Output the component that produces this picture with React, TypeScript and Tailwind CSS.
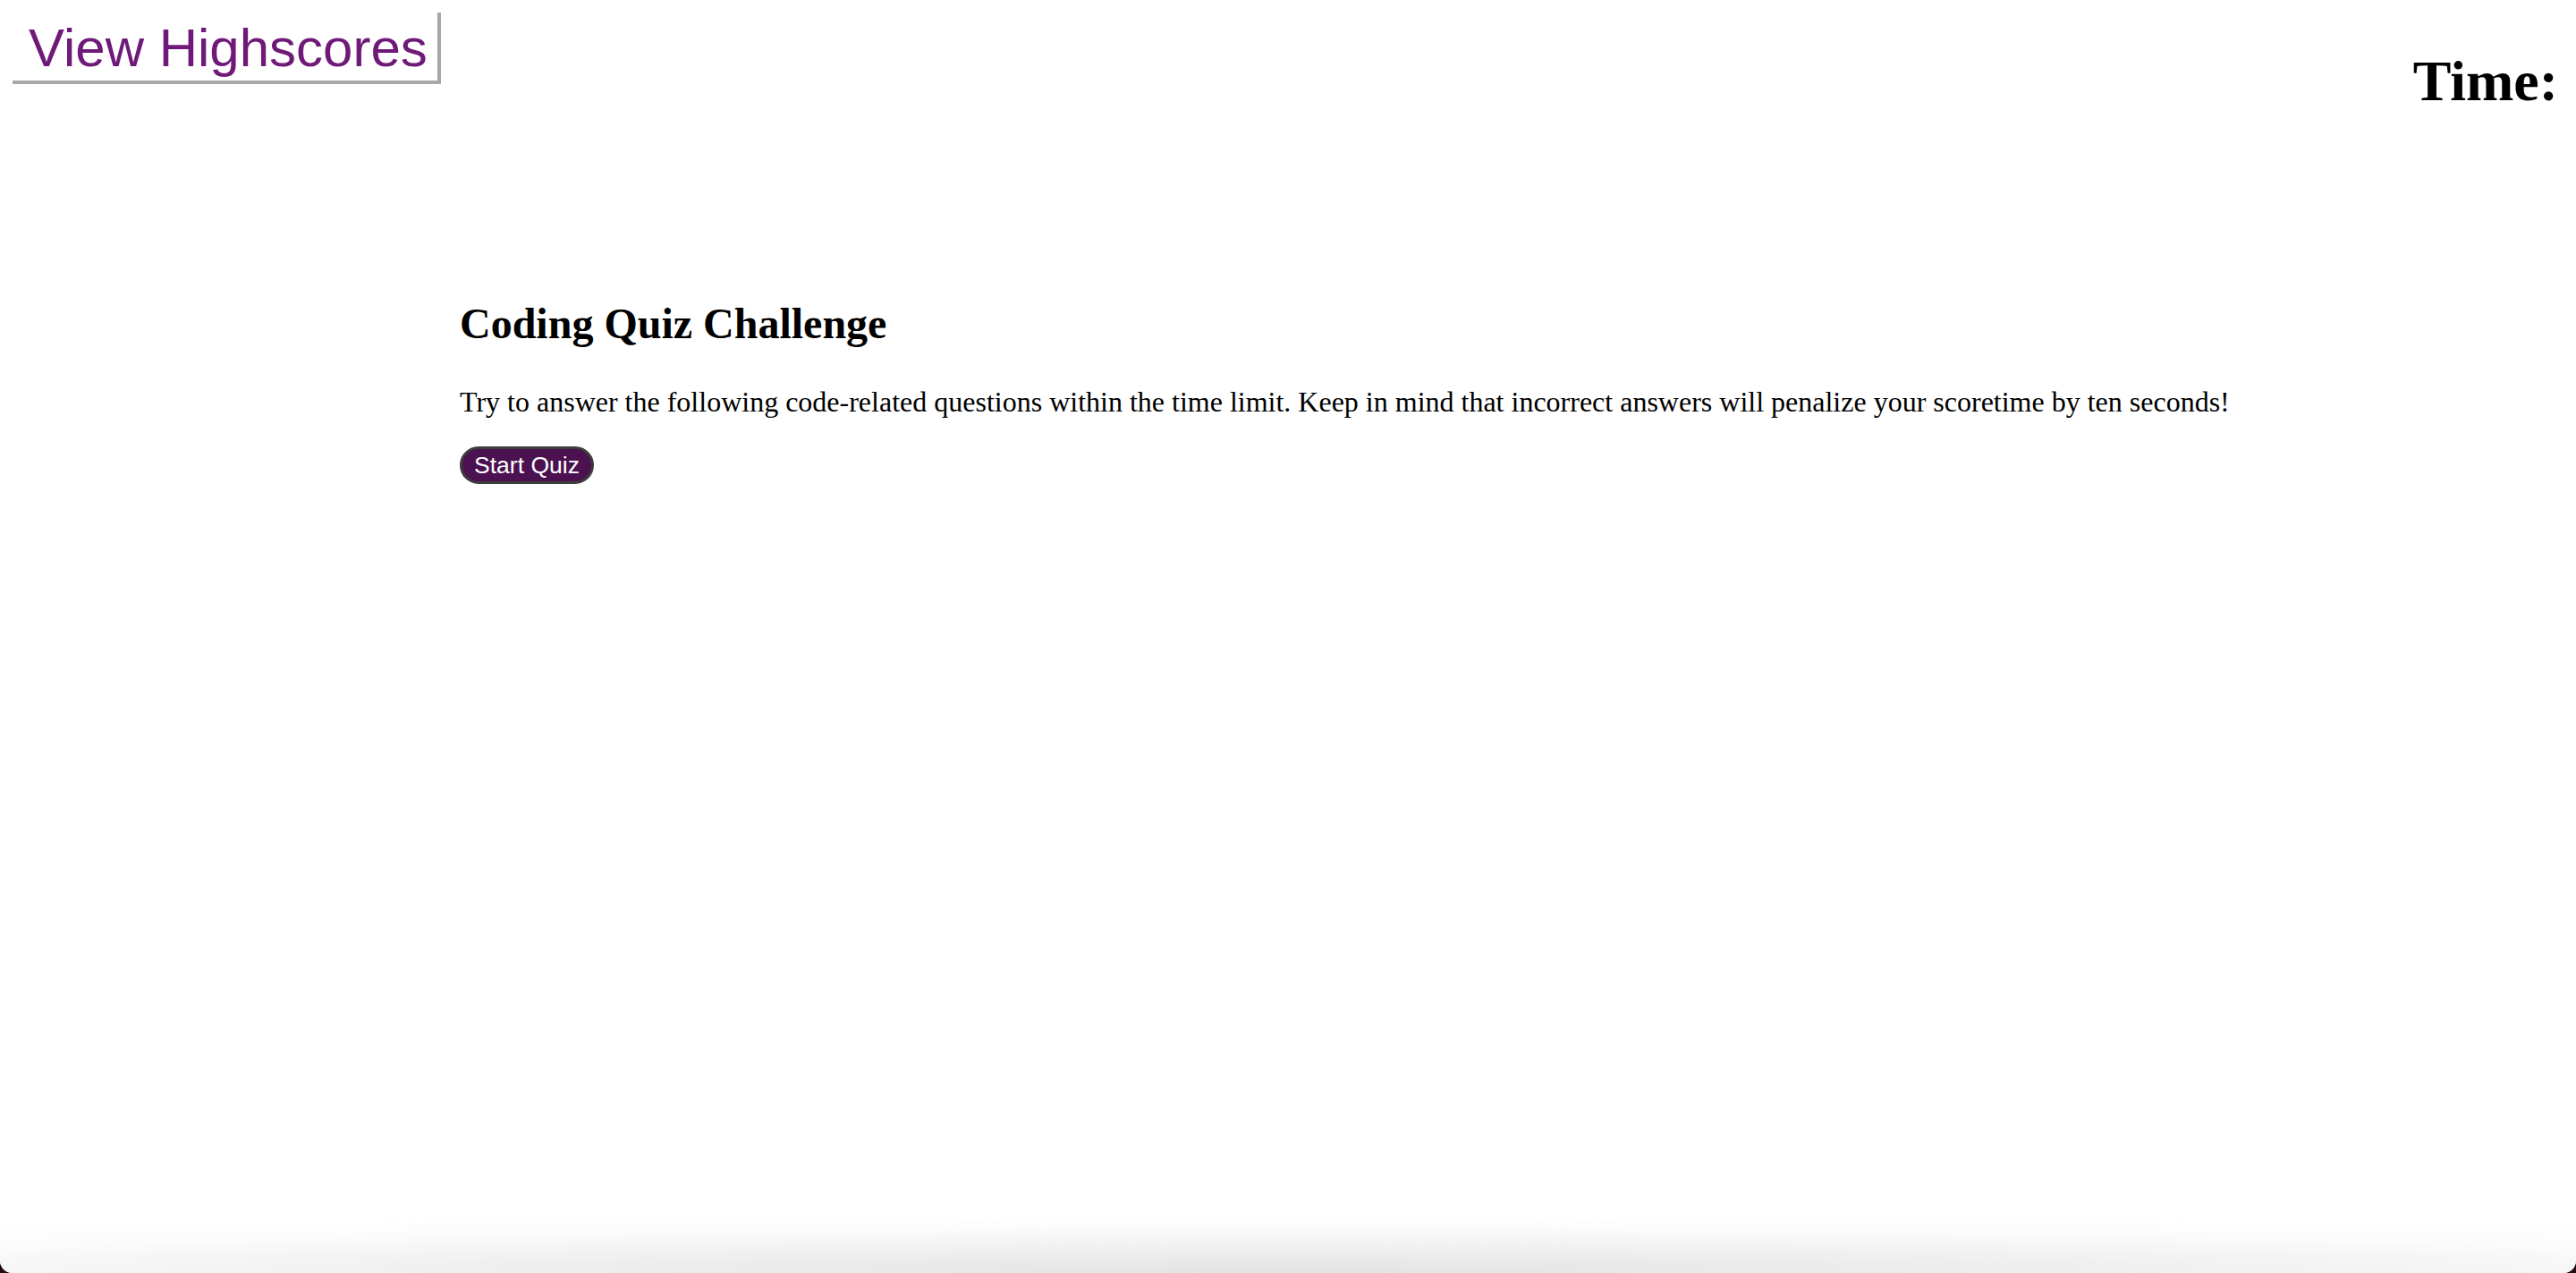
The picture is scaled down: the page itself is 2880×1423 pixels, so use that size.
export default function App() {
  return (
    <div className="h-[1423px] w-[2880px] bg-[#220810]">
      <div className="relative flex h-full flex-col overflow-hidden rounded-b-[14px] bg-white">
        <header className="flex items-start justify-between">
          <button className="ml-[10px] mt-[10px] h-[80px] w-[479px] bg-white pl-[22px] pt-[8px] text-left font-['Liberation_Sans',Arial,sans-serif] text-[60px] leading-[72px] text-[#6f1a78] shadow-[4px_4px_0_#a8a8a8]">
            View Highscores
          </button>
          <h1 className="mr-[20px] mt-[54px] font-['Liberation_Serif','Times_New_Roman',serif] text-[64px] font-bold leading-[74px] text-black">
            Time:
          </h1>
        </header>

        <main className="ml-[514px] mt-[206px] font-['Liberation_Serif','Times_New_Roman',serif] text-black">
          <h2 className="text-[48px] font-bold leading-[56px]">Coding Quiz Challenge</h2>
          <p className="mt-[41px] text-[32px] leading-[36px]">
            Try to answer the following code-related questions within the time limit. Keep in mind that incorrect answers will penalize your scoretime by ten seconds!
          </p>
          <button className="mt-[32px] flex h-[42px] w-[150px] items-center justify-center rounded-full border-[3px] border-[#3d3d3d] bg-[#4b1150] font-['Liberation_Sans',Arial,sans-serif] text-[26.5px] leading-none text-white">
            Start Quiz
          </button>
        </main>

        <div className="flex-1" />
        <div className="h-[66px] bg-[radial-gradient(ellipse_80%_100%_at_50%_100%,#e3e3e3_0%,#efefef_40%,#fbfbfb_75%,#ffffff_100%)]" />
      </div>
    </div>
  );
}
